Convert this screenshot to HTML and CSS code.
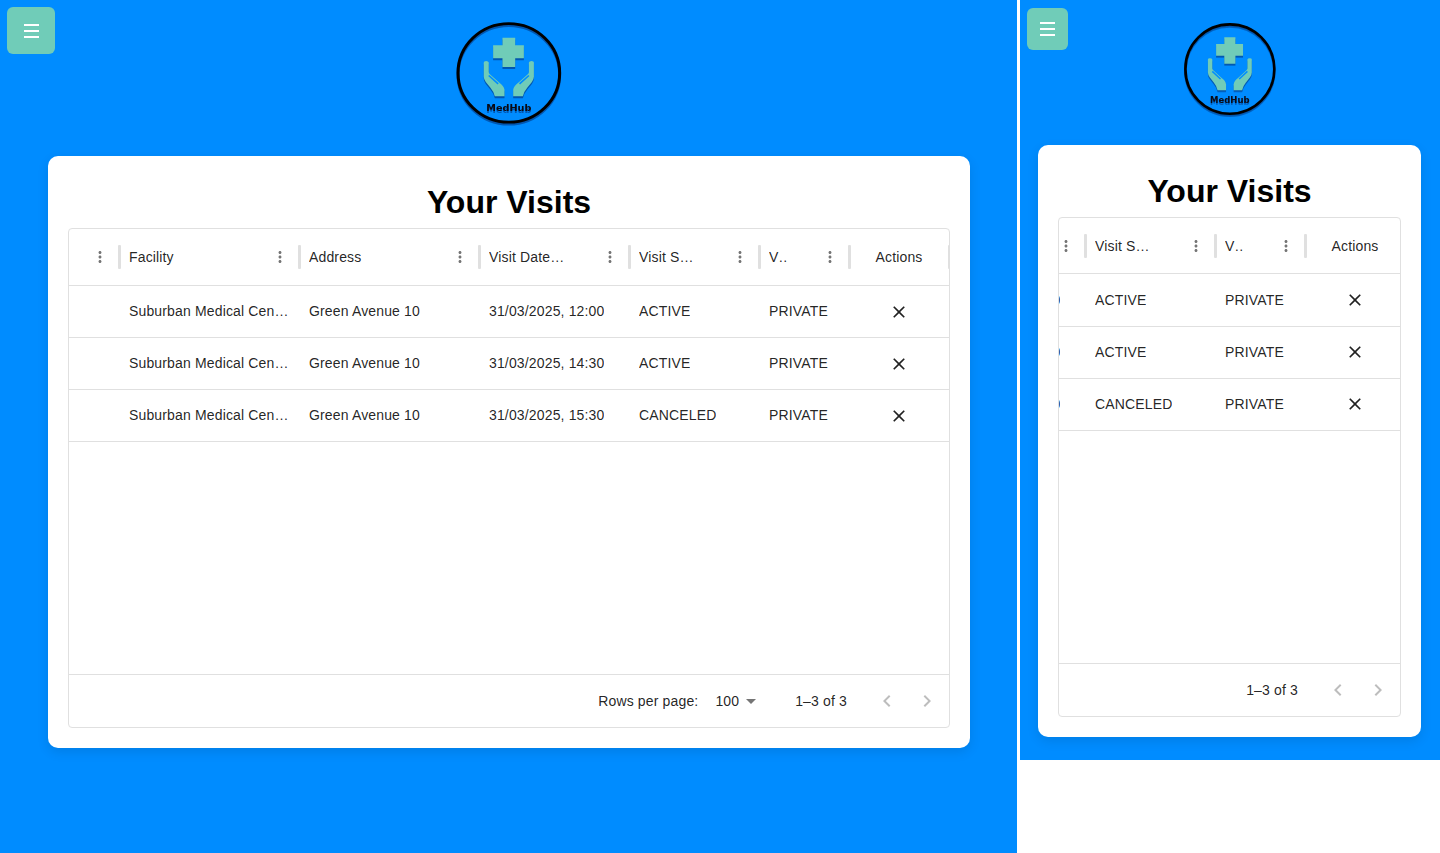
FILE: index.html
```html
<!DOCTYPE html>
<html lang="en">
<head>
<meta charset="utf-8">
<title>Your Visits</title>
<link rel="stylesheet" href="styles.css">
</head>
<body>
<svg class="defs" width="0" height="0" aria-hidden="true">
  <symbol id="logo" viewBox="40 30 335 330" preserveAspectRatio="none">
    <g class="logo-shadow">
      <circle cx="207" cy="190" r="152" fill="none" stroke="#000" stroke-width="9"/>
      <path class="logo-teal" d="M188 82h38v23h26v40h-26v27h-38v-27h-28v-40h28z"/>
      <g id="hand-l">
        <path class="logo-teal" d="M132 158q0-5 7-5t8 5v30q1 5 5 8l26 24q14 10 16 22v20h-29q-3-14-13-26l-14-18q-6-8-6-16z"/>
        <path class="logo-cut" d="M147 198l28 26"/>
      </g>
      <use href="#hand-l" transform="matrix(-1 0 0 1 414 0)"/>
      <text class="logo-text" x="207" y="307" text-anchor="middle">MedHub</text>
    </g>
  </symbol>
  <symbol id="i-more" viewBox="0 0 24 24"><path d="M12 8c1.1 0 2-.9 2-2s-.9-2-2-2-2 .9-2 2 .9 2 2 2zm0 2c-1.1 0-2 .9-2 2s.9 2 2 2 2-.9 2-2-.9-2-2-2zm0 6c-1.1 0-2 .9-2 2s.9 2 2 2 2-.9 2-2-.9-2-2-2z"/></symbol>
  <symbol id="i-close" viewBox="0 0 24 24"><path d="M19 6.41 17.59 5 12 10.59 6.41 5 5 6.41 10.59 12 5 17.59 6.41 19 12 13.41 17.59 19 19 17.59 13.41 12z"/></symbol>
  <symbol id="i-drop" viewBox="0 0 24 24"><path d="M7 10l5 5 5-5z"/></symbol>
  <symbol id="i-prev" viewBox="0 0 24 24"><path d="M15.41 7.41 14 6l-6 6 6 6 1.41-1.41L10.83 12z"/></symbol>
  <symbol id="i-next" viewBox="0 0 24 24"><path d="M10 6 8.59 7.41 13.17 12l-4.58 4.59L10 18l6-6z"/></symbol>
</svg>

<main class="pane pane-wide">
  <button class="menu-btn" type="button" aria-label="Menu"><span></span><span></span><span></span></button>
  <svg class="logo"><use href="#logo"/></svg>
  <section class="card">
    <h1 class="title">Your Visits</h1>
    <div class="grid">
      <div class="viewport">
        <div class="track">
          <div class="row head">
            <div class="col c-0"><svg class="more"><use href="#i-more"/></svg><i class="sep"></i></div>
            <div class="col c-a"><span class="label">Facility</span><svg class="more"><use href="#i-more"/></svg><i class="sep"></i></div>
            <div class="col c-a"><span class="label">Address</span><svg class="more"><use href="#i-more"/></svg><i class="sep"></i></div>
            <div class="col c-d"><span class="label">Visit Date and Time</span><svg class="more"><use href="#i-more"/></svg><i class="sep"></i></div>
            <div class="col c-s"><span class="label">Visit Status</span><svg class="more"><use href="#i-more"/></svg><i class="sep"></i></div>
            <div class="col c-t"><span class="label">Visit Type</span><svg class="more"><use href="#i-more"/></svg><i class="sep"></i></div>
            <div class="col c-x center">Actions<i class="sep"></i></div>
          </div>
          <div class="row body">
            <div class="col c-0"></div>
            <div class="col c-a"><span class="cell">Suburban Medical Center</span></div>
            <div class="col c-a"><span class="cell">Green Avenue 10</span></div>
            <div class="col c-d"><span class="cell">31/03/2025, 12:00</span></div>
            <div class="col c-s"><span class="cell">ACTIVE</span></div>
            <div class="col c-t"><span class="cell">PRIVATE</span></div>
            <div class="col c-x center"><svg class="close"><use href="#i-close"/></svg></div>
          </div>
          <div class="row body">
            <div class="col c-0"></div>
            <div class="col c-a"><span class="cell">Suburban Medical Center</span></div>
            <div class="col c-a"><span class="cell">Green Avenue 10</span></div>
            <div class="col c-d"><span class="cell">31/03/2025, 14:30</span></div>
            <div class="col c-s"><span class="cell">ACTIVE</span></div>
            <div class="col c-t"><span class="cell">PRIVATE</span></div>
            <div class="col c-x center"><svg class="close"><use href="#i-close"/></svg></div>
          </div>
          <div class="row body">
            <div class="col c-0"></div>
            <div class="col c-a"><span class="cell">Suburban Medical Center</span></div>
            <div class="col c-a"><span class="cell">Green Avenue 10</span></div>
            <div class="col c-d"><span class="cell">31/03/2025, 15:30</span></div>
            <div class="col c-s"><span class="cell">CANCELED</span></div>
            <div class="col c-t"><span class="cell">PRIVATE</span></div>
            <div class="col c-x center"><svg class="close"><use href="#i-close"/></svg></div>
          </div>
        </div>
      </div>
      <footer class="foot">
        <span class="rows-label">Rows per page:</span>
        <span class="select">100<svg class="drop"><use href="#i-drop"/></svg></span>
        <span class="count">1–3 of 3</span>
        <span class="nav"><svg class="chev"><use href="#i-prev"/></svg></span>
        <span class="nav"><svg class="chev"><use href="#i-next"/></svg></span>
      </footer>
    </div>
  </section>
</main>

<main class="pane pane-narrow">
  <button class="menu-btn" type="button" aria-label="Menu"><span></span><span></span><span></span></button>
  <svg class="logo"><use href="#logo"/></svg>
  <section class="card">
    <h1 class="title">Your Visits</h1>
    <div class="grid">
      <div class="viewport">
        <div class="track">
          <div class="row head">
            <div class="col c-0"><svg class="more"><use href="#i-more"/></svg><i class="sep"></i></div>
            <div class="col c-a"><span class="label">Facility</span><svg class="more"><use href="#i-more"/></svg><i class="sep"></i></div>
            <div class="col c-a"><span class="label">Address</span><svg class="more"><use href="#i-more"/></svg><i class="sep"></i></div>
            <div class="col c-d"><span class="label">Visit Date and Time</span><svg class="more"><use href="#i-more"/></svg><i class="sep"></i></div>
            <div class="col c-s"><span class="label">Visit Status</span><svg class="more"><use href="#i-more"/></svg><i class="sep"></i></div>
            <div class="col c-t"><span class="label">Visit Type</span><svg class="more"><use href="#i-more"/></svg><i class="sep"></i></div>
            <div class="col c-x center">Actions<i class="sep"></i></div>
          </div>
          <div class="row body">
            <div class="col c-0"></div>
            <div class="col c-a"><span class="cell">Suburban Medical Center</span></div>
            <div class="col c-a"><span class="cell">Green Avenue 10</span></div>
            <div class="col c-d"><span class="cell">31/03/2025, 12:00</span></div>
            <div class="col c-s"><span class="cell">ACTIVE</span></div>
            <div class="col c-t"><span class="cell">PRIVATE</span></div>
            <div class="col c-x center"><svg class="close"><use href="#i-close"/></svg></div>
          </div>
          <div class="row body">
            <div class="col c-0"></div>
            <div class="col c-a"><span class="cell">Suburban Medical Center</span></div>
            <div class="col c-a"><span class="cell">Green Avenue 10</span></div>
            <div class="col c-d"><span class="cell">31/03/2025, 14:30</span></div>
            <div class="col c-s"><span class="cell">ACTIVE</span></div>
            <div class="col c-t"><span class="cell">PRIVATE</span></div>
            <div class="col c-x center"><svg class="close"><use href="#i-close"/></svg></div>
          </div>
          <div class="row body">
            <div class="col c-0"></div>
            <div class="col c-a"><span class="cell">Suburban Medical Center</span></div>
            <div class="col c-a"><span class="cell">Green Avenue 10</span></div>
            <div class="col c-d"><span class="cell">31/03/2025, 15:30</span></div>
            <div class="col c-s"><span class="cell">CANCELED</span></div>
            <div class="col c-t"><span class="cell">PRIVATE</span></div>
            <div class="col c-x center"><svg class="close"><use href="#i-close"/></svg></div>
          </div>
        </div>
      </div>
      <footer class="foot">
        <span class="count">1–3 of 3</span>
        <span class="nav"><svg class="chev"><use href="#i-prev"/></svg></span>
        <span class="nav"><svg class="chev"><use href="#i-next"/></svg></span>
      </footer>
    </div>
  </section>
</main>
</body>
</html>
```

FILE: styles.css
```css
* { box-sizing: border-box; }
html, body { margin: 0; height: 100%; overflow: hidden; }
body {
  display: flex;
  align-items: flex-start;
  gap: 3px;
  background: #fff;
  font-family: "Liberation Sans", Arial, sans-serif;
  font-size: 14px;
  letter-spacing: .15px;
  color: rgba(0, 0, 0, .87);
}
.defs { position: absolute; }

.pane { position: relative; background: #008cff; display: flex; flex-direction: column; }
.pane-wide { width: 1017px; height: 853px; padding: 21px 47px 0 48px; }
.pane-narrow { width: 420px; height: 760px; padding: 22px 19px 0 18px; }

.menu-btn {
  position: absolute;
  display: flex;
  flex-direction: column;
  align-items: center;
  justify-content: center;
  gap: 4px;
  padding: 0;
  border: 0;
  border-radius: 6px;
  background: #70ccb8;
}
.menu-btn span { display: block; width: 15px; height: 2px; background: #fff; }
.pane-wide .menu-btn { left: 7px; top: 7px; width: 48px; height: 47px; }
.pane-narrow .menu-btn { left: 7px; top: 8px; width: 41px; height: 42px; gap: 4.5px; }
.pane-narrow .menu-btn span { height: 1.5px; }

.logo { display: block; align-self: center; flex: none; }
.pane-wide .logo { width: 112px; height: 107px; margin-bottom: 28px; }
.pane-narrow .logo { width: 98px; height: 97px; margin-bottom: 26px; }
.logo-shadow { filter: blur(.3px) drop-shadow(0 6px 2px rgba(0, 40, 110, .55)); }
.logo-teal { fill: #70ccb8; }
.logo-cut { fill: none; stroke: #008cff; stroke-width: 5; }
.logo-text { font: 700 29px "DejaVu Sans", sans-serif; letter-spacing: 0; fill: #0a0a14; }

.card {
  height: 592px;
  padding: 0 20px 20px;
  border-radius: 10px;
  background: #fff;
  box-shadow: 0 4px 12px rgba(0, 0, 0, .1);
  display: flex;
  flex-direction: column;
}
.title {
  margin: 20px 0 0;
  height: 52px;
  line-height: 52px;
  font-size: 32px;
  font-weight: 700;
  letter-spacing: 0;
  text-align: center;
  color: #000;
}

.grid {
  flex: 1;
  min-height: 0;
  display: flex;
  flex-direction: column;
  border: 1px solid #e0e0e0;
  border-radius: 4px;
  overflow: hidden;
}
.viewport { flex: 1; min-height: 0; overflow: hidden; }
.track { width: 880px; }
.pane-narrow .track { margin-left: -534px; }

.row { display: flex; border-bottom: 1px solid #e0e0e0; }
.head { height: 57px; padding-bottom: 1px; }
.body { height: 52px; padding-bottom: 1px; }
.pane-narrow .head { height: 56px; padding-bottom: 0; }
.pane-narrow .head + .body { height: 53px; padding-top: 1px; }
.col {
  position: relative;
  flex: none;
  display: flex;
  align-items: center;
  padding: 0 10px;
  min-width: 0;
}
.c-0 { width: 50px; justify-content: flex-end; }
.c-a { width: 180px; }
.c-d { width: 150px; }
.c-s { width: 130px; }
.c-t { width: 90px; }
.c-x { width: 100px; }
.center { justify-content: center; }

.label {
  flex: 1;
  min-width: 0;
  margin-right: 34px;
  overflow: hidden;
  white-space: nowrap;
  text-overflow: ellipsis;
}
.more { flex: none; width: 18px; height: 18px; fill: #757575; }
.sep { position: absolute; right: -2px; top: 16px; width: 3px; height: 24px; background: #e0e0e0; border-radius: 1px; z-index: 1; }
.cell { min-width: 0; overflow: hidden; white-space: nowrap; text-overflow: ellipsis; }
.close { width: 20px; height: 20px; margin-top: 2px; fill: rgba(0, 0, 0, .87); }
.pane-narrow .close { margin-top: 0; }

.foot {
  flex: none;
  height: 53px;
  display: flex;
  align-items: center;
  justify-content: flex-end;
  padding-right: 2px;
  border-top: 1px solid #e0e0e0;
}
.rows-label { margin-right: 17px; }
.select { display: flex; align-items: center; margin-right: 32px; }
.drop { width: 24px; height: 24px; fill: #757575; }
.count { margin-right: 20px; }
.nav { display: flex; align-items: center; justify-content: center; width: 40px; height: 40px; }
.chev { width: 24px; height: 24px; fill: rgba(0, 0, 0, .26); }
```
